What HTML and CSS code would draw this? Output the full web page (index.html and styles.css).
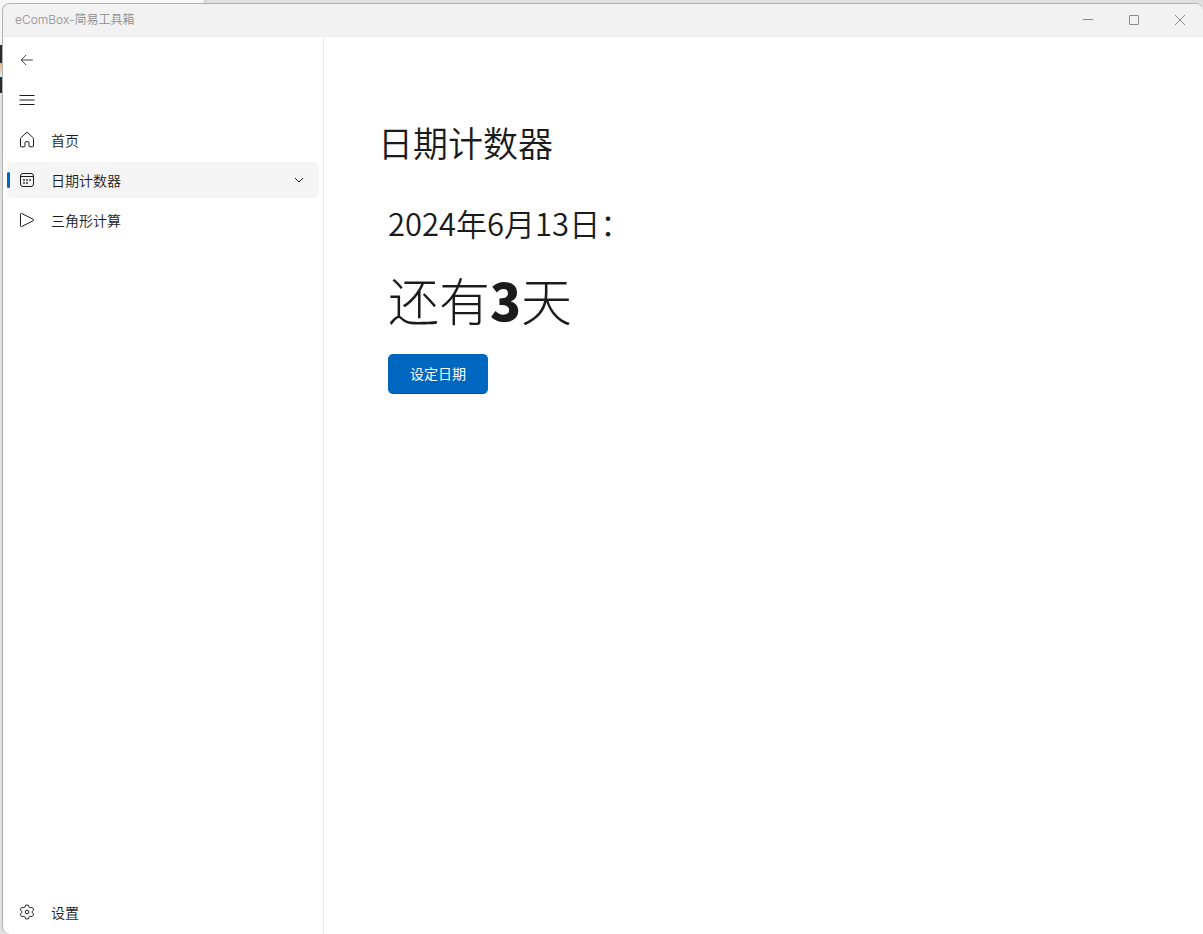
FILE: index.html
```
<!DOCTYPE html>
<html lang="zh-CN">
<head>
    <meta charset="UTF-8">
    <meta name="viewport" content="width=device-width, initial-scale=1.0">
    <title>eComBox-简易工具箱</title>
    <link rel="stylesheet" href="styles.css">
</head>
<body>
<div class="desktop">
    <div class="desktop-tab"></div>
    <div class="desktop-thumb"></div>
</div>
<div class="window">
    <header class="title-bar">
        <span class="title-text">eComBox-简易工具箱</span>
        <div class="window-buttons">
            <button type="button" aria-label="最小化">
                <svg width="10" height="10" viewBox="0 0 10 10"><path d="M0 4.5h10"/></svg>
            </button>
            <button type="button" aria-label="最大化">
                <svg width="10" height="10" viewBox="0 0 10 10"><rect x="0.5" y="0.5" width="9" height="9" rx="0.5"/></svg>
            </button>
            <button type="button" aria-label="关闭">
                <svg width="10" height="10" viewBox="0 0 10 10"><path d="M0 0l10 10M10 0L0 10"/></svg>
            </button>
        </div>
    </header>

    <div class="window-body">
        <nav class="nav-pane">
            <button type="button" class="nav-item" aria-label="返回">
                <svg class="icon icon-back" viewBox="0 0 16 16"><path d="M7.2 3L2.2 8l5 5M2.2 8h11.6"/></svg>
            </button>
            <button type="button" class="nav-item" aria-label="菜单">
                <svg class="icon" viewBox="0 0 16 16"><path d="M.5 3.5h15M.5 8h15M.5 12.5h15"/></svg>
            </button>
            <a href="#home" class="nav-item">
                <svg class="icon" viewBox="0 0 16 16"><path d="M7 .9a1.5 1.5 0 0 1 2 0l5 4.8a1.5 1.5 0 0 1 .5 1.1V14a.8.8 0 0 1-.8.8h-2.9a.8.8 0 0 1-.8-.8v-3.500a.8.8 0 0 0-.8-.8H6.800a.8.8 0 0 0-.8.8V14a.8.8 0 0 1-.8.8H2.300a.8.8 0 0 1-.8-.8V6.800A1.500 1.500 0 0 1 2 5.700z"/></svg>
                <span>首页</span>
            </a>
            <a href="#date" class="nav-item active">
                <svg class="icon" viewBox="0 0 16 16">
                    <rect x="1.5" y="1.5" width="13" height="13" rx="2.5"/>
                    <path d="M1.5 4.5h13"/>
                    <path class="dots" d="M4 7h2v2H4zM7 7h2v2H7zM10 7h2v2h-2zM4 10h2v2H4zM7 10h2v2H7z"/>
                </svg>
                <span>日期计数器</span>
                <svg class="chevron" width="10" height="10" viewBox="0 0 10 10"><path d="M1 3l4 4 4-4"/></svg>
            </a>
            <a href="#triangle" class="nav-item">
                <svg class="icon" viewBox="0 0 16 16"><path d="M1.5 2.2v11.6c0 .7.7 1 1.3.7l11.5-5.8c.6-.3.6-1.1 0-1.4L2.800 1.500c-.6-.3-1.300 0-1.300.7z"/></svg>
                <span>三角形计算</span>
            </a>
            <a href="#settings" class="nav-item nav-settings">
                <svg class="icon" viewBox="0 0 16 16">
                    <path d="M6.4 1.3Q8 .7 9.6 1.3L10 3.2Q10.4 3.7 11.2 3.8L13 3.2Q14.3 4.3 14.7 6L13.2 7.3Q13 8 13.2 8.7L14.7 10Q14.3 11.7 13 12.8L11.2 12.2Q10.4 12.3 10 12.8L9.6 14.7Q8 15.3 6.4 14.7L6 12.8Q5.6 12.3 4.8 12.2L3 12.8Q1.7 11.7 1.3 10L2.8 8.7Q3 8 2.8 7.3L1.3 6Q1.7 4.3 3 3.2L4.8 3.8Q5.6 3.7 6 3.2z"/>
                    <circle cx="8" cy="8" r="1.8"/>
                </svg>
                <span>设置</span>
            </a>
        </nav>

        <main class="content">
            <h1>日期计数器</h1>
            <section class="counter">
                <p class="target-date">2024年6月13日：</p>
                <p class="days-left">还有<strong>3</strong>天</p>
                <button type="button" class="set-date">设定日期</button>
            </section>
        </main>
    </div>
</div>
</body>
</html>
```
FILE: styles.css
```
* {
    margin: 0;
    padding: 0;
    box-sizing: border-box;
}

body {
    min-height: 100vh;
    display: flex;
    padding: 3px 0 0 2px;
    background: #e0e0e0;
    color: #1b1b1b;
    font-family: "Noto Sans CJK SC", sans-serif;
    font-size: 14px;
    font-weight: 350;
}

button {
    border: none;
    background: none;
    color: inherit;
    font: inherit;
}

svg {
    fill: none;
    stroke: currentColor;
}

/* whatever peeks out from behind the window */
.desktop {
    position: absolute;
    inset: 0;
    z-index: -1;
}

.desktop-tab {
    width: 205px;
    height: 45px;
    background: #f7f7f7;
    border-right: 1px solid #c4c4c4;
}

.desktop-thumb {
    width: 12px;
    height: 48px;
    background: linear-gradient(#2b2b2b 38%, #e8b878 38%, #d8eef5 66%, #2b2b2b 66%);
}

.window {
    flex: 1;
    display: flex;
    flex-direction: column;
    border: 1px solid #b0b0b0;
    border-right: none;
    border-bottom: none;
    border-radius: 8px 8px 0 8px;
    background: #fff;
    overflow: hidden;
}

.title-bar {
    height: 33px;
    display: flex;
    justify-content: space-between;
    padding-left: 12px;
    background: #f2f2f2;
    border-bottom: 1px solid #eee;
    color: #8c8c8c;
}

.title-text {
    font-family: Inter, "Noto Sans CJK SC", sans-serif;
    font-size: 12px;
    line-height: 32px;
}

.window-buttons {
    display: flex;
}

.window-buttons button {
    width: 46px;
    display: flex;
    align-items: center;
    justify-content: center;
}

.window-body {
    flex: 1;
    display: flex;
}

.nav-pane {
    width: 321px;
    display: flex;
    flex-direction: column;
    gap: 4px;
    padding: 5px 4px 4px;
    border-right: 1px solid #ededed;
}

.nav-item {
    position: relative;
    height: 36px;
    display: flex;
    align-items: center;
    gap: 16px;
    padding: 0 12px;
    border-radius: 5px;
    color: #1b1b1b;
    text-decoration: none;
}

.nav-item.active {
    background: #f5f5f5;
}

.nav-item.active::before {
    content: "";
    position: absolute;
    left: 0;
    top: 10px;
    width: 3px;
    height: 16px;
    border-radius: 2px;
    background: #0067c0;
}

.icon {
    width: 16px;
    height: 16px;
}

.icon-back {
    color: #444;
}

.dots {
    fill: #666;
    stroke: none;
}

.chevron {
    margin-left: auto;
    margin-right: 3px;
}

.nav-settings {
    margin-top: auto;
}

.content {
    flex: 1;
    padding: 81px 54px;
}

h1 {
    font-size: 35px;
    font-weight: 350;
    line-height: 48px;
}

.counter {
    padding: 35px 10px;
}

.target-date {
    font-size: 31px;
    font-weight: 350;
    line-height: 44px;
}

.days-left {
    margin-top: 20px;
    font-size: 51px;
    font-weight: 300;
    line-height: 68px;
}

.days-left strong {
    font-weight: 900;
}

.set-date {
    width: 100px;
    height: 40px;
    margin-top: 21px;
    padding-bottom: 2px;
    border: 1px solid #0067c0;
    border-bottom-color: #004f94;
    border-radius: 5px;
    background: #0067c0;
    color: #fff;
    font-weight: 400;
}
```
